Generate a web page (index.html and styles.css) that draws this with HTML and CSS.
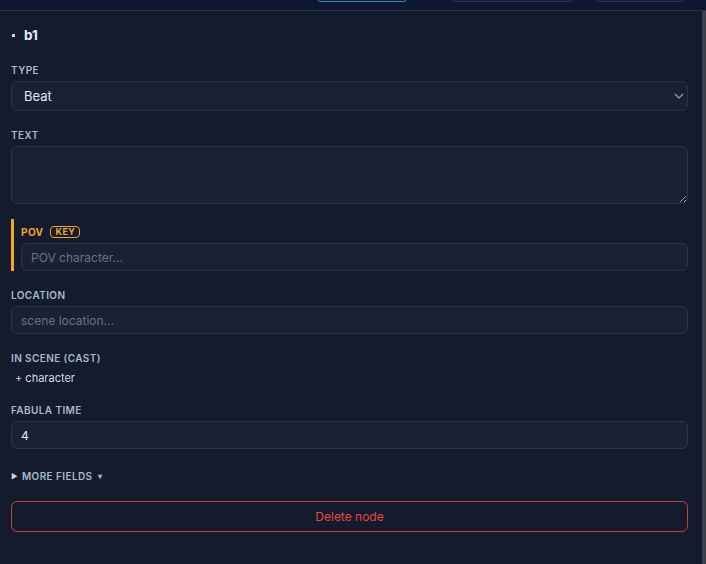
FILE: index.html
```html
<!DOCTYPE html>
<html lang="en">
    <head>
        <meta charset="UTF-8" />
        <meta name="viewport" content="width=device-width, initial-scale=1.0" />
        <title>Node inspector</title>
        <link rel="stylesheet" href="styles.css">
    </head>
    <body>
        <div class="toolbar">
            <button class="tool-btn active"></button>
            <button class="tool-btn wide"></button>
            <button class="tool-btn"></button>
        </div>

        <div class="panel">
            <div class="inspector">
                <div class="node-title">
                    <span class="node-dot"></span>
                    <span>b1</span>
                </div>

                <div class="field">
                    <label class="field-label">Type</label>
                    <div class="select-wrap">
                        <select class="input select">
                            <option>Beat</option>
                        </select>
                        <svg class="select-arrow" width="10" height="6" viewBox="0 0 10 6">
                            <path d="M1 1l4 4 4-4" fill="none" stroke="#8a93a3" stroke-width="1.4" />
                        </svg>
                    </div>
                </div>

                <div class="field">
                    <label class="field-label">Text</label>
                    <textarea class="input textarea"></textarea>
                </div>

                <!-- key field gets the orange rail -->
                <div class="field key-field">
                    <label class="field-label key-label">POV <span class="key-badge">KEY</span></label>
                    <input class="input" type="text" placeholder="POV character..." />
                </div>

                <div class="field">
                    <label class="field-label">Location</label>
                    <input class="input" type="text" placeholder="scene location..." />
                </div>

                <div class="field">
                    <label class="field-label">In scene (cast)</label>
                    <button class="add-link">+ character</button>
                </div>

                <div class="field">
                    <label class="field-label">Fabula time</label>
                    <input class="input" type="text" value="4" />
                </div>

                <div class="more-fields">
                    <span class="more-caret">&#9654;</span>
                    <span>More fields</span>
                    <span class="more-down">&#9662;</span>
                </div>

                <button class="delete-btn">Delete node</button>
            </div>
        </div>
    </body>
</html>
```

FILE: styles.css
```css
body {
    margin: 0;
    padding: 0;
    background: #131b2d;
    font-family: Inter, "Noto Sans", sans-serif;
    color: #e2e8f0;
    height: 564px;
    overflow: hidden;
}
.toolbar {
    height: 10px;
    background: #0e1731;
    border-bottom: 1px solid #2a3346;
    display: flex;
    align-items: flex-end;
    overflow: hidden;
    padding-left: 316px;
}
.tool-btn {
    flex: none;
    width: 92px;
    height: 30px;
    margin-bottom: 8px;
    margin-right: 42px;
    background: #111a33;
    border: 1px solid #2f3849;
    border-radius: 5px;
}
.tool-btn.active {
    border-color: #3f83c9;
}
.tool-btn.wide {
    width: 125px;
    margin-right: 19px;
}
.panel {
    height: 553px;
    border-right: 4px solid #3c4048;
}
.inspector {
    padding: 14px 14px 0 11px;
}
.node-title {
    display: flex;
    align-items: center;
    gap: 9px;
    font-size: 13.5px;
    font-weight: 700;
    color: #e8eefa;
    height: 20px;
    margin-bottom: 19px;
}
.node-dot {
    width: 3px;
    height: 3px;
    margin-left: 1px;
    background: #c9d1dc;
}
.field {
    margin-bottom: 18px;
}
.field-label {
    display: block;
    font-size: 10px;
    font-weight: 600;
    letter-spacing: 0.04em;
    text-transform: uppercase;
    color: #a9b9ce;
    line-height: 12px;
    margin-bottom: 5px;
}
.input {
    display: block;
    box-sizing: border-box;
    width: 100%;
    height: 28px;
    padding: 0 9px;
    background: #1a2133;
    border: 1px solid #2b3446;
    border-radius: 6px;
    color: #e2e8f0;
    font-family: inherit;
    font-size: 12px;
    outline: none;
}
.input::placeholder {
    color: #6b7380;
}
.select-wrap {
    position: relative;
}
.select {
    height: 30px;
    padding-left: 12px;
    font-size: 13px;
    appearance: none;
    -webkit-appearance: none;
}
.select-arrow {
    position: absolute;
    right: 4px;
    top: 12px;
}
.textarea {
    height: 58px;
    padding: 7px 9px;
    resize: vertical;
}
.key-field {
    border-left: 3px solid #f5a524;
    padding-left: 7px;
    padding-top: 7px;
    margin-top: -3px;
}
.key-label {
    color: #f5a524;
    font-weight: 700;
    display: flex;
    align-items: center;
    gap: 7px;
    margin-bottom: 5px;
}
.key-badge {
    font-size: 9px;
    font-weight: 700;
    letter-spacing: 0.05em;
    color: #f5a524;
    border: 1px solid #f5a524;
    border-radius: 4px;
    padding: 0 4px;
    line-height: 10px;
}
.add-link {
    display: block;
    background: none;
    border: none;
    padding: 2px 4px 1px;
    margin: 0;
    color: #cfd8e3;
    font-family: inherit;
    font-size: 11px;
    cursor: pointer;
}
.more-fields {
    display: flex;
    align-items: center;
    gap: 4px;
    font-size: 10px;
    font-weight: 600;
    letter-spacing: 0.04em;
    text-transform: uppercase;
    color: #a9b9ce;
    margin-top: 21px;
    margin-bottom: 19px;
}
.more-caret {
    font-size: 7px;
    color: #cfd8e3;
}
.more-down {
    font-size: 8px;
    margin-left: 2px;
}
.delete-btn {
    display: block;
    width: 100%;
    height: 31px;
    background: none;
    border: 1px solid #c0443c;
    border-radius: 6px;
    color: #ef4444;
    font-family: inherit;
    font-size: 12px;
    cursor: pointer;
}
```
